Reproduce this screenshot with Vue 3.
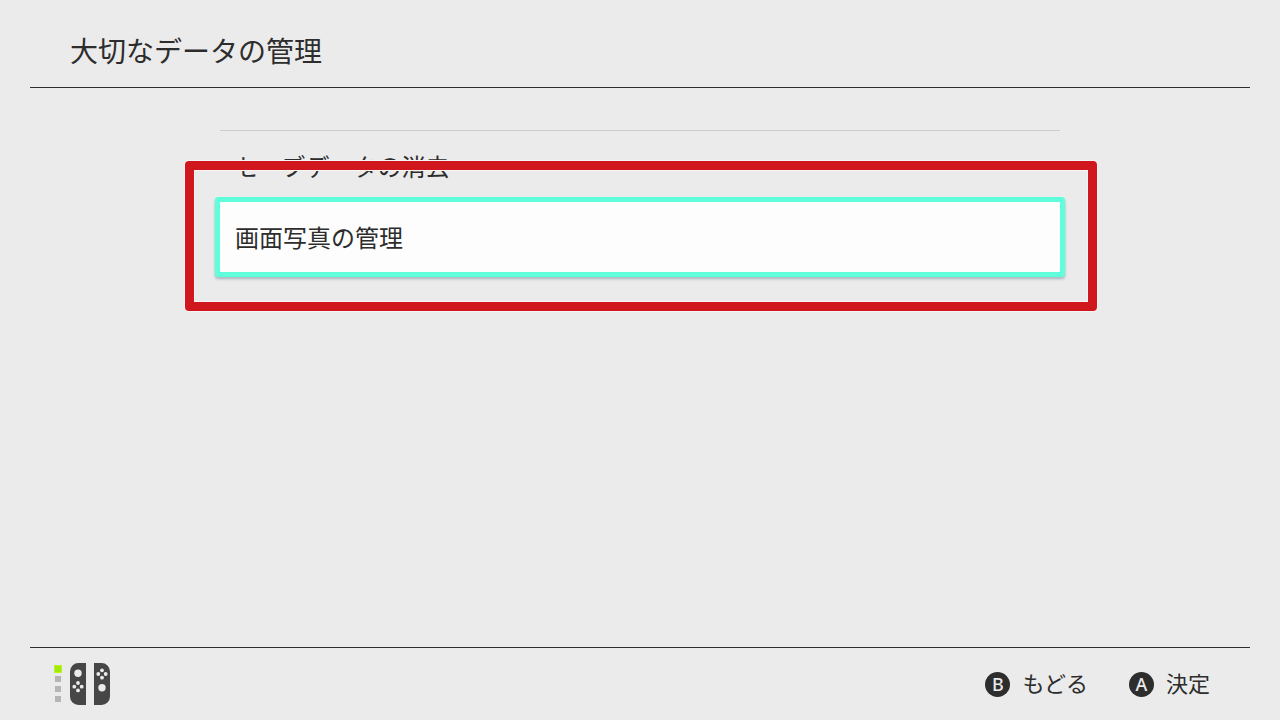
<script setup>
import { ref } from 'vue'

const items = ['セーブデータの消去', '画面写真の管理']
const selected = ref(1)
const players = [1, 2, 3, 4]
const actions = [
  { key: 'B', label: 'もどる' },
  { key: 'A', label: '決定' },
]
</script>

<template>
  <div class="screen">
    <header class="header">
      <h1>大切なデータの管理</h1>
    </header>

    <main class="content">
      <ul class="list">
        <li v-for="(item, i) in items" :key="item" class="row" :class="{ selected: i === selected }">
          <button type="button" class="item" @click="selected = i">{{ item }}</button>
          <span v-if="i === selected" class="frame" aria-hidden="true"></span>
        </li>
      </ul>
    </main>

    <footer class="footer">
      <div class="controller">
        <div class="lamps">
          <span v-for="p in players" :key="p" class="lamp" :class="{ on: p === 1 }"></span>
        </div>
        <svg class="joycons" width="40" height="42" viewBox="0 0 40 42" aria-hidden="true">
          <path d="M16 0H8.500A8.500 8.500 0 0 0 0 8.500V33.500A8.500 8.500 0 0 0 8.500 42H16Z" fill="#464646" />
          <path d="M24 0H31.500A8.500 8.500 0 0 1 40 8.500V33.500A8.500 8.500 0 0 1 31.500 42H24Z" fill="#464646" />
          <g fill="#ebebeb">
            <circle cx="8" cy="10.300" r="3.700" />
            <circle cx="8" cy="20" r="1.900" />
            <circle cx="8" cy="27.400" r="1.900" />
            <circle cx="4.300" cy="23.700" r="1.900" />
            <circle cx="11.700" cy="23.700" r="1.900" />
            <circle cx="32" cy="24.700" r="3.700" />
            <circle cx="32" cy="7.300" r="1.900" />
            <circle cx="32" cy="14.700" r="1.900" />
            <circle cx="28.300" cy="11" r="1.900" />
            <circle cx="35.700" cy="11" r="1.900" />
          </g>
        </svg>
      </div>
      <div class="actions">
        <button v-for="a in actions" :key="a.key" type="button" class="action">
          <span class="key">{{ a.key }}</span>
          <span class="label">{{ a.label }}</span>
        </button>
      </div>
    </footer>
  </div>
</template>

<style>
body {
  margin: 0;
  background: #ebebeb;
}
</style>

<style scoped>
.screen {
  display: flex;
  flex-direction: column;
  box-sizing: border-box;
  min-height: 100vh;
  padding: 0 30px;
  background: #ebebeb;
  color: #2d2d2d;
  font-family: "Noto Sans CJK JP", sans-serif;
}

button {
  margin: 0;
  padding: 0;
  border: 0;
  background: none;
  color: inherit;
  font: inherit;
  text-align: left;
  cursor: pointer;
}

.header {
  padding: 30px 40px 17px;
  border-bottom: 1px solid #2d2d2d;
}

h1 {
  margin: 0;
  font-size: 28px;
  line-height: 40px;
  font-weight: 400;
}

.content {
  flex: 1;
  padding-top: 42px;
}

.list {
  display: flex;
  flex-direction: column;
  gap: 1px;
  max-width: 840px;
  margin: 0 auto;
  padding: 0;
  border-top: 1px solid #cdcdcd;
  list-style: none;
}

.row {
  position: relative;
}

.item {
  display: block;
  box-sizing: border-box;
  width: 100%;
  padding: 17px 15px;
  font-size: 24px;
  line-height: 36px;
}

.selected .item {
  border-radius: 1px;
  background: #fdfdfd;
  box-shadow: 0 0 0 5px #5fffdc, 0 2px 3px 5px rgba(60, 100, 120, 0.4);
}

.frame {
  position: absolute;
  inset: -41px -37px -39px -35px;
  border: 9px solid #cf171d;
  border-radius: 4px;
  box-shadow: 0 0 0 1px #f8f4f4, inset 0 0 0 1px #f8f4f4;
  pointer-events: none;
}

.footer {
  display: flex;
  align-items: center;
  justify-content: space-between;
  height: 72px;
  padding: 0 40px 0 24px;
  border-top: 1px solid #2d2d2d;
}

.controller {
  display: flex;
  align-items: center;
  gap: 8px;
}

.lamps {
  display: flex;
  flex-direction: column;
  align-items: center;
  gap: 4px;
  width: 8px;
}

.lamp {
  width: 6px;
  height: 6px;
  background: #b5b5b5;
}

.lamp.on {
  background: #a2e80f;
  box-shadow: 0 0 0 1px #b8f520;
}

.joycons {
  display: block;
}

.actions {
  display: flex;
  gap: 41px;
}

.action {
  display: flex;
  align-items: center;
  gap: 12px;
  font-size: 22px;
  line-height: 32px;
}

.label {
  padding-bottom: 4px;
}

.key {
  width: 25px;
  height: 25px;
  border-radius: 50%;
  background: #2d2d2d;
  color: #ebebeb;
  font-family: "Noto Sans", sans-serif;
  font-size: 18px;
  font-weight: 500;
  line-height: 25px;
  text-align: center;
}
</style>
